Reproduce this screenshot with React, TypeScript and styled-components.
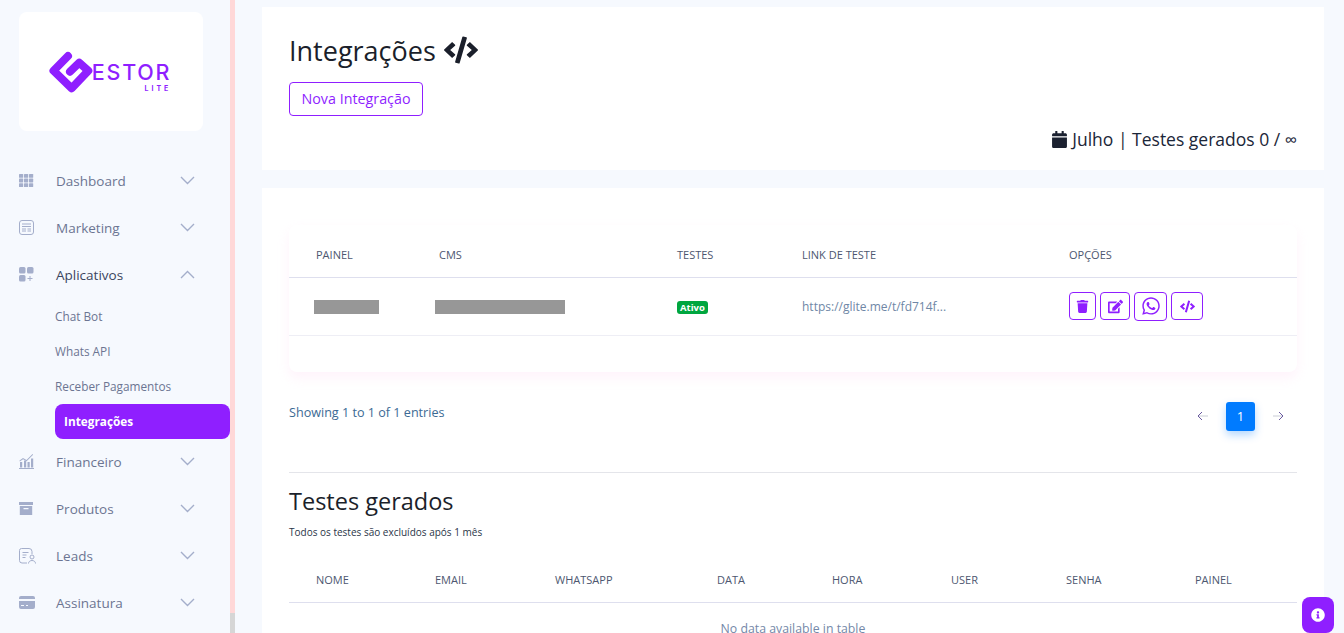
import { ReactNode } from 'react'
import styled, { createGlobalStyle } from 'styled-components'
import { FaCalendar, FaCode, FaEdit, FaInfoCircle, FaTrash, FaWhatsapp } from 'react-icons/fa'

const PURPLE = '#8f1fff'
const MENU_ICON = '#a4aecb'
const FONT = `'Open Sans', 'Lato', sans-serif`

const GlobalStyle = createGlobalStyle`
    html, body {
        margin: 0;
        height: 100%;
        overflow: hidden;
        background: #f6f9fe;
        font-family: ${FONT};
    }
    * {
        box-sizing: border-box;
    }
`

const Root = styled.div`
    display: flex;
    height: 633px;
    overflow: hidden;
    background: #f6f9fe;
`

const Sidebar = styled.aside`
    width: 230px;
    flex: none;
    padding: 12px 0 0 19px;
`

const ScrollTrack = styled.div`
    width: 5px;
    flex: none;
    display: flex;
    align-items: flex-end;
    background: #ffd8d8;
`

const ScrollThumb = styled.div`
    width: 100%;
    height: 20px;
    background: #d6d6d6;
`

const LogoCard = styled.div`
    width: 184px;
    height: 119px;
    display: flex;
    align-items: center;
    justify-content: center;
    margin-bottom: 26px;
    background: #fff;
    border-radius: 8px;
`

const LogoMark = styled.div`
    display: flex;
    align-items: center;
    margin-left: -3px;
`

const LogoText = styled.div`
    display: flex;
    flex-direction: column;
    align-items: flex-end;
    margin: 12px 0 0 -1px;
    color: ${PURPLE};
    line-height: 1;
`

const LogoWord = styled.span`
    font-family: 'Inter', sans-serif;
    font-size: 21.5px;
    line-height: 21px;
    font-weight: 500;
    letter-spacing: 1.8px;
`

const LogoSub = styled.span`
    margin-top: 2px;
    font-family: 'Inter', sans-serif;
    font-size: 7px;
    line-height: 8px;
    font-weight: 700;
    letter-spacing: 3px;
`

const MenuRow = styled.div`
    height: 47px;
    display: flex;
    align-items: center;
`

const MenuIconBox = styled.span`
    width: 37px;
    flex: none;
    display: flex;
    align-items: center;
`

const MenuLabel = styled.span<{ $open?: boolean }>`
    flex: 1;
    font-size: 13.5px;
    color: ${(p) => (p.$open ? '#3b4560' : '#6c7592')};
`

const Chevron = styled.svg`
    width: 15px;
    height: 9px;
    margin-right: 35px;
    fill: none;
    stroke: #a4aecb;
    stroke-width: 1.4;
`

const SubList = styled.div`
    display: flex;
    flex-direction: column;
    margin: 1px 0 -1px 36px;
`

const SubItem = styled.div<{ $active?: boolean }>`
    height: 35px;
    display: flex;
    align-items: center;
    padding: 0 0 1px ${(p) => (p.$active ? '9px' : '0')};
    border-radius: 8px;
    font-size: 11.8px;
    font-weight: ${(p) => (p.$active ? 700 : 400)};
    color: ${(p) => (p.$active ? '#fff' : '#6c7592')};
    background: ${(p) => (p.$active ? PURPLE : 'transparent')};
`

const Main = styled.main`
    flex: 1;
    min-width: 0;
    display: flex;
    flex-direction: column;
    gap: 18px;
    padding: 7px 20px 0 27px;
`

const HeaderCard = styled.section`
    height: 163px;
    flex: none;
    display: flex;
    flex-direction: column;
    padding: 25px 27px 0;
    background: #fff;
`

const PageTitle = styled.h1`
    display: flex;
    align-items: center;
    gap: 8px;
    margin: 0;
    height: 36px;
    font-size: 27px;
    font-weight: 400;
    color: #1b1f2b;
`

const OutlineButton = styled.button`
    align-self: flex-start;
    height: 34px;
    margin-top: 14px;
    padding: 0 0 2px;
    width: 134px;
    border: 1px solid ${PURPLE};
    border-radius: 4px;
    background: #fff;
    font-family: ${FONT};
    font-size: 14.3px;
    color: ${PURPLE};
`

const Quota = styled.div`
    display: flex;
    align-items: center;
    justify-content: flex-end;
    gap: 4px;
    margin-top: 11px;
    font-size: 17.5px;
    color: #1b2638;
`

const ContentCard = styled.section`
    flex: 1;
    min-height: 0;
    padding: 37px 27px 0;
    background: #fff;
`

const TableCard = styled.div<{ $shadow?: boolean }>`
    border-radius: 8px;
    background: #fff;
    box-shadow: ${(p) => (p.$shadow ? '0 6px 12px rgba(255, 200, 235, 0.22)' : 'none')};
    padding-bottom: ${(p) => (p.$shadow ? '36px' : '0')};
`

const Table = styled.table`
    width: 100%;
    table-layout: fixed;
    border-collapse: collapse;
`

const Th = styled.th<{ $w: number; $tall?: boolean }>`
    width: ${(p) => p.$w}px;
    height: ${(p) => (p.$tall ? 52 : 45)}px;
    padding: ${(p) => (p.$tall ? 8 : 0)}px 0 0 27px;
    border-bottom: 1px solid #dedfee;
    text-align: left;
    font-size: 11px;
    font-weight: 400;
    color: #4d5770;
`

const Td = styled.td`
    height: 58px;
    padding: 0 0 0 27px;
    border-bottom: 1px solid #eeeef5;
    font-size: 12px;
    color: #6f87a6;
`

const EmptyCell = styled.td`
    height: 52px;
    text-align: center;
    font-size: 12.3px;
    color: #7488a8;
`

const Redacted = styled.div<{ $w: number; $x: number }>`
    width: ${(p) => p.$w}px;
    height: 14px;
    margin: 1px 0 0 ${(p) => p.$x}px;
    background: #979797;
`

const Badge = styled.span`
    display: inline-block;
    padding: 0 3px;
    border-radius: 3px;
    background: #00a63f;
    font-size: 9.5px;
    font-weight: 700;
    color: #fff;
`

const Actions = styled.div`
    display: flex;
    align-items: center;
    gap: 4px;
`

const ActionButton = styled.button<{ $w: number; $h: number }>`
    width: ${(p) => p.$w}px;
    height: ${(p) => p.$h}px;
    display: flex;
    align-items: center;
    justify-content: center;
    padding: 0;
    border: 1px solid ${PURPLE};
    border-radius: 4px;
    background: #fff;
    color: ${PURPLE};
`

const PagerRow = styled.div`
    height: 101px;
    display: flex;
    justify-content: space-between;
    padding-top: 30px;
    border-bottom: 1px solid #e4e5ea;
`

const ShowingText = styled.span`
    font-size: 12.6px;
    line-height: 21px;
    color: #3c6a94;
`

const Pager = styled.div`
    display: flex;
    align-items: center;
    align-self: flex-start;
    gap: 17px;
    margin-right: 13px;
`

const PageArrow = styled.svg`
    width: 12px;
    height: 10px;
    fill: none;
`

const PageCurrent = styled.span`
    width: 29px;
    height: 29px;
    display: flex;
    align-items: center;
    justify-content: center;
    border-radius: 3px;
    background: #007bff;
    box-shadow: 0 4px 8px rgba(0, 123, 255, 0.3);
    font-size: 13px;
    color: #fff;
`

const SectionTitle = styled.h2`
    margin: 13px 0 0;
    font-size: 23.5px;
    line-height: 30px;
    font-weight: 400;
    color: #1b1f2b;
`

const SectionNote = styled.p`
    margin: 9px 0 19px;
    font-size: 10px;
    line-height: 14px;
    color: #2a3548;
`

const InfoButton = styled.button`
    position: fixed;
    right: 10px;
    bottom: 0;
    width: 32px;
    height: 36px;
    display: flex;
    align-items: center;
    justify-content: center;
    padding: 0;
    border: 0;
    border-radius: 8px;
    background: ${PURPLE};
    color: #fff;
`

const GridIcon = () => (
    <svg width="15" height="13" viewBox="0 0 15 13" fill={MENU_ICON}>
        {[0, 5, 10].map((x) =>
            [0, 4.6, 9.2].map((y) => <rect key={`${x}-${y}`} x={x} y={y} width="4.2" height="3.8" rx="0.6" />),
        )}
    </svg>
)

const NewsIcon = () => (
    <svg width="15" height="15" viewBox="0 0 15 15" fill="none" stroke={MENU_ICON}>
        <rect x="0.5" y="0.5" width="14" height="14" rx="2.5" />
        <path d="M3 4h9M3 6.5h9M3 9h4M8.5 9h3.5M3 11h4M8.5 11h3.5" />
    </svg>
)

const AppsIcon = () => (
    <svg width="15" height="15" viewBox="0 0 15 15" fill={MENU_ICON}>
        <rect x="0" y="0" width="6.5" height="6.5" rx="1.5" />
        <rect x="8" y="0" width="6.5" height="6.5" rx="1.5" />
        <rect x="0" y="8" width="6.5" height="6.5" rx="1.5" />
        <path d="M10.5 9h1v2h2v1h-2v2h-1v-2h-2v-1h2z" />
    </svg>
)

const ChartIcon = () => (
    <svg width="15" height="15" viewBox="0 0 15 15" fill={MENU_ICON}>
        <rect x="1" y="8" width="2.2" height="5.5" />
        <rect x="5" y="6.5" width="2.2" height="7" />
        <rect x="8.5" y="8" width="2.2" height="5.5" />
        <rect x="12" y="4.5" width="2.2" height="9" />
        <rect x="0" y="14" width="15" height="1" />
        <path d="M0.5 6.5L4 4l3.5 2 6-6 .6.7-6.500 6.500-3.500-2-3.300 2.300z" />
    </svg>
)

const BoxIcon = () => (
    <svg width="14" height="13" viewBox="0 0 14 13" fill={MENU_ICON}>
        <rect x="0" y="0" width="14" height="3" />
        <path d="M0.8 4h12.4v9H0.8zM4.5 6v1.2h5V6z" fillRule="evenodd" />
    </svg>
)

const LeadsIcon = () => (
    <svg width="17" height="16" viewBox="0 0 17 16" fill="none" stroke={MENU_ICON}>
        <path d="M8 15H3a2.5 2.5 0 0 1-2.5-2.5v-10A2 2 0 0 1 2.5.5H10a3 3 0 0 1 3 3V6" />
        <path d="M3.5 4.500h6M3.500 7h4M3.500 9.500h3" />
        <circle cx="13" cy="9" r="2" />
        <path d="M9.500 15.500c0-4 7-4 7 0" />
    </svg>
)

const CardIcon = () => (
    <svg width="16" height="13" viewBox="0 0 16 13" fill={MENU_ICON}>
        <path d="M2 0h12a2 2 0 0 1 2 2v1H0V2a2 2 0 0 1 2-2z" />
        <path d="M0 5h16v6a2 2 0 0 1-2 2H2a2 2 0 0 1-2-2zM2 9v1h3V9zm5 0v1h2V9z" fillRule="evenodd" />
    </svg>
)

const ChevronIcon = ({ up }: { up?: boolean }) => (
    <Chevron viewBox="0 0 15 9">
        <path d={up ? 'M1 8l6.500-6.500L14 8' : 'M1 1l6.500 6.500L14 1'} />
    </Chevron>
)

const LogoIcon = () => (
    <svg width="45" height="43" viewBox="0 0 45 43">
        <path
            d="M20 6L5.500 20.700 23.700 38.300 40.300 20.700 31.300 12.700 22 21.700"
            fill="none"
            stroke={PURPLE}
            strokeWidth="8"
            strokeLinejoin="round"
            strokeLinecap="round"
        />
    </svg>
)

const ArrowIcon = ({ left }: { left?: boolean }) => (
    <PageArrow viewBox="0 0 12 10">
        <path d="M1 5h10" stroke="#c9ccd6" />
        <path d={left ? 'M5 1L1 5l4 4' : 'M7 1l4 4-4 4'} stroke="#6a5aa0" />
    </PageArrow>
)

const MENU_TOP: { label: string; icon: ReactNode; open?: boolean }[] = [
    { label: 'Dashboard', icon: <GridIcon /> },
    { label: 'Marketing', icon: <NewsIcon /> },
    { label: 'Aplicativos', icon: <AppsIcon />, open: true },
]

const MENU_BOTTOM: { label: string; icon: ReactNode }[] = [
    { label: 'Financeiro', icon: <ChartIcon /> },
    { label: 'Produtos', icon: <BoxIcon /> },
    { label: 'Leads', icon: <LeadsIcon /> },
    { label: 'Assinatura', icon: <CardIcon /> },
]

const SUB_ITEMS = ['Chat Bot', 'Whats API', 'Receber Pagamentos', 'Integrações']

const PANEL_COLUMNS: [string, number][] = [
    ['PAINEL', 123],
    ['CMS', 238],
    ['TESTES', 125],
    ['LINK DE TESTE', 267],
    ['OPÇÕES', 255],
]

const TEST_COLUMNS: [string, number][] = [
    ['NOME', 119],
    ['EMAIL', 120],
    ['WHATSAPP', 162],
    ['DATA', 115],
    ['HORA', 119],
    ['USER', 115],
    ['SENHA', 129],
    ['PAINEL', 129],
]

export default function App() {
    return (
        <Root>
            <GlobalStyle />
            <Sidebar>
                <LogoCard>
                    <LogoMark>
                        <LogoIcon />
                        <LogoText>
                            <LogoWord>ESTOR</LogoWord>
                            <LogoSub>LITE</LogoSub>
                        </LogoText>
                    </LogoMark>
                </LogoCard>
                {MENU_TOP.map((item) => (
                    <MenuRow key={item.label}>
                        <MenuIconBox>{item.icon}</MenuIconBox>
                        <MenuLabel $open={item.open}>{item.label}</MenuLabel>
                        <ChevronIcon up={item.open} />
                    </MenuRow>
                ))}
                <SubList>
                    {SUB_ITEMS.map((item) => (
                        <SubItem key={item} $active={item === 'Integrações'}>
                            {item}
                        </SubItem>
                    ))}
                </SubList>
                {MENU_BOTTOM.map((item) => (
                    <MenuRow key={item.label}>
                        <MenuIconBox>{item.icon}</MenuIconBox>
                        <MenuLabel>{item.label}</MenuLabel>
                        <ChevronIcon />
                    </MenuRow>
                ))}
            </Sidebar>
            <ScrollTrack>
                <ScrollThumb />
            </ScrollTrack>
            <Main>
                <HeaderCard>
                    <PageTitle>
                        Integrações <FaCode size={34} />
                    </PageTitle>
                    <OutlineButton>Nova Integração</OutlineButton>
                    <Quota>
                        <FaCalendar size={17} color="#1b2130" /> Julho | Testes gerados 0 / ∞
                    </Quota>
                </HeaderCard>
                <ContentCard>
                    <TableCard $shadow>
                        <Table>
                            <thead>
                                <tr>
                                    {PANEL_COLUMNS.map(([label, w]) => (
                                        <Th key={label} $w={w} $tall>
                                            {label}
                                        </Th>
                                    ))}
                                </tr>
                            </thead>
                            <tbody>
                                <tr>
                                    <Td>
                                        <Redacted $w={65} $x={-2} />
                                    </Td>
                                    <Td>
                                        <Redacted $w={130} $x={-4} />
                                    </Td>
                                    <Td>
                                        <Badge>Ativo</Badge>
                                    </Td>
                                    <Td>https://glite.me/t/fd714f...</Td>
                                    <Td>
                                        <Actions>
                                            <ActionButton $w={27} $h={28}>
                                                <FaTrash size={13} />
                                            </ActionButton>
                                            <ActionButton $w={30} $h={28}>
                                                <FaEdit size={15} />
                                            </ActionButton>
                                            <ActionButton $w={33} $h={29}>
                                                <FaWhatsapp size={20} />
                                            </ActionButton>
                                            <ActionButton $w={32} $h={28}>
                                                <FaCode size={15} />
                                            </ActionButton>
                                        </Actions>
                                    </Td>
                                </tr>
                            </tbody>
                        </Table>
                    </TableCard>
                    <PagerRow>
                        <ShowingText>Showing 1 to 1 of 1 entries</ShowingText>
                        <Pager>
                            <ArrowIcon left />
                            <PageCurrent>1</PageCurrent>
                            <ArrowIcon />
                        </Pager>
                    </PagerRow>
                    <SectionTitle>Testes gerados</SectionTitle>
                    <SectionNote>Todos os testes são excluídos após 1 mês</SectionNote>
                    <TableCard>
                        <Table>
                            <thead>
                                <tr>
                                    {TEST_COLUMNS.map(([label, w]) => (
                                        <Th key={label} $w={w}>
                                            {label}
                                        </Th>
                                    ))}
                                </tr>
                            </thead>
                            <tbody>
                                <tr>
                                    <EmptyCell colSpan={8}>No data available in table</EmptyCell>
                                </tr>
                            </tbody>
                        </Table>
                    </TableCard>
                </ContentCard>
            </Main>
            <InfoButton>
                <FaInfoCircle size={14} />
            </InfoButton>
        </Root>
    )
}
